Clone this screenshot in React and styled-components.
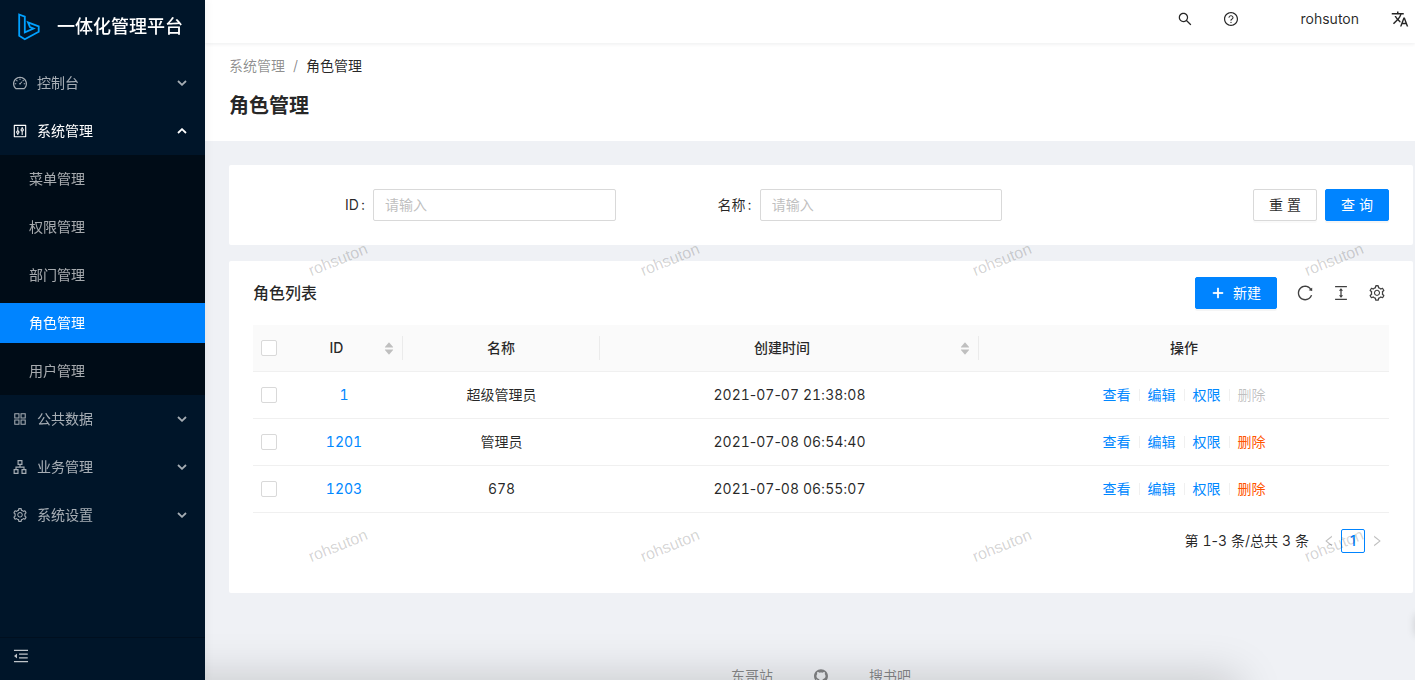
import React, { useState } from "react";
import styled, { createGlobalStyle, css } from "styled-components";
import {
  AiFillCaretDown,
  AiFillCaretUp,
  AiOutlineApartment,
  AiOutlineAppstore,
  AiOutlineColumnHeight,
  AiOutlineControl,
  AiOutlineDashboard,
  AiOutlineGithub,
  AiOutlineLeft,
  AiOutlineMenuFold,
  AiOutlinePlus,
  AiOutlineQuestionCircle,
  AiOutlineReload,
  AiOutlineRight,
  AiOutlineSearch,
  AiOutlineSetting,
} from "react-icons/ai";
import { MdTranslate } from "react-icons/md";

const GlobalStyle = createGlobalStyle`
  * {
    box-sizing: border-box;
  }
  body {
    margin: 0;
    color: rgba(0, 0, 0, 0.85);
    font-family: Inter, "Noto Sans CJK SC", sans-serif;
    font-size: 14px;
    line-height: 22px;
    background: #eff1f5;
  }
  button,
  input {
    font: inherit;
    color: inherit;
  }
  a {
    text-decoration: none;
  }
  svg {
    display: block;
    flex: none;
  }
`;

const Layout = styled.div`
  display: flex;
  height: 100vh;
  overflow: hidden;
`;

const Sider = styled.aside`
  display: flex;
  flex-direction: column;
  flex: none;
  width: 205px;
  background: #001529;
  box-shadow: 2px 0 8px rgba(29, 35, 41, 0.05);
  z-index: 2;
`;

const Brand = styled.a`
  display: flex;
  align-items: center;
  gap: 16px;
  height: 59px;
  padding: 0 0 5px 16px;
  color: #fff;
  font-size: 18px;
  font-weight: 500;
`;

const Menu = styled.nav`
  flex: 1;
`;

const MenuTitle = styled.button`
  display: flex;
  align-items: center;
  gap: 9px;
  width: 100%;
  height: 48px;
  padding: 0 18px 0 12px;
  border: 0;
  background: none;
  color: ${(props) => (props.$open ? "#fff" : "rgba(255, 255, 255, 0.65)")};
  text-align: left;
  cursor: pointer;
`;

const MenuLabel = styled.span`
  flex: 1;
`;

const SubMenu = styled.ul`
  margin: 0;
  padding: 4px 0;
  list-style: none;
  background: #000c17;
`;

const SubItem = styled.li`
  & + & {
    margin-top: 8px;
  }
`;

const SubLink = styled.a`
  display: block;
  height: 40px;
  padding-left: 29px;
  line-height: 40px;
  color: ${(props) => (props.$active ? "#fff" : "rgba(255, 255, 255, 0.65)")};
  background: ${(props) => (props.$active ? "#0084ff" : "transparent")};
`;

const Collapse = styled.button`
  display: flex;
  align-items: center;
  height: 43px;
  padding: 0 12px 6px;
  border: 0;
  border-top: 1px solid #000f1f;
  background: none;
  color: rgba(255, 255, 255, 0.75);
  cursor: pointer;
`;

const Main = styled.div`
  position: relative;
  flex: 1;
  min-width: 0;
  overflow: hidden;
`;

const Header = styled.header`
  position: relative;
  display: flex;
  align-items: center;
  justify-content: flex-end;
  height: 43px;
  padding: 0 6px 5px 24px;
  background: #fff;
  box-shadow: 0 1px 4px rgba(0, 21, 41, 0.08);
  z-index: 1;
`;

const HeaderButton = styled.button`
  display: flex;
  align-items: center;
  padding: 0;
  border: 0;
  background: none;
  cursor: pointer;
  & + & {
    margin-left: 30px;
  }
`;

const UserName = styled.a`
  margin: 0 32px 0 62px;
  color: rgba(0, 0, 0, 0.85);
`;

const PageHeader = styled.div`
  height: 98px;
  padding: 12px 24px 0;
  background: #fff;
`;

const Breadcrumb = styled.nav`
  display: flex;
  gap: 8px;
  color: rgba(0, 0, 0, 0.45);
`;

const Crumb = styled.a`
  color: ${(props) => (props.$current ? "rgba(0, 0, 0, 0.85)" : "inherit")};
`;

const PageTitle = styled.h1`
  margin: 12px 0 0;
  font-size: 20px;
  font-weight: 600;
  line-height: 34px;
`;

const Content = styled.main`
  display: flex;
  flex-direction: column;
  gap: 16px;
  padding: 24px 2px 0 24px;
`;

const Card = styled.section`
  padding: 0 24px;
  background: #fff;
  border-radius: 2px;
`;

const SearchForm = styled.form`
  display: grid;
  grid-template-columns: repeat(3, minmax(0, 1fr));
  gap: 24px;
  padding: 24px 0;
`;

const Field = styled.div`
  display: flex;
  align-items: center;
`;

const FieldLabel = styled.label`
  flex: none;
  width: 120px;
  padding-right: 8px;
  text-align: right;
  &::after {
    content: ":";
    margin-left: 2px;
  }
`;

const TextInput = styled.input`
  flex: 1;
  min-width: 0;
  height: 32px;
  padding: 0 11px 2px;
  border: 1px solid #d9d9d9;
  border-radius: 2px;
  background: #fff;
  &::placeholder {
    color: #bfbfbf;
  }
`;

const Buttons = styled.div`
  display: flex;
  justify-content: flex-end;
  gap: 8px;
`;

const Button = styled.button`
  display: flex;
  align-items: center;
  justify-content: center;
  gap: 8px;
  height: 32px;
  padding: 0 15px;
  border: 1px solid #d9d9d9;
  border-radius: 2px;
  background: #fff;
  box-shadow: 0 2px 0 rgba(0, 0, 0, 0.02);
  white-space: nowrap;
  cursor: pointer;
  ${(props) =>
    props.$primary &&
    css`
      border-color: #0084ff;
      background: #0084ff;
      color: #fff;
      box-shadow: 0 2px 0 rgba(0, 0, 0, 0.04);
    `}
`;

const Toolbar = styled.div`
  display: flex;
  align-items: center;
  height: 64px;
`;

const ListTitle = styled.h2`
  flex: 1;
  margin: 0;
  font-size: 16px;
  font-weight: 500;
`;

const Tools = styled.div`
  display: flex;
  gap: 12px;
  margin-left: 16px;
`;

const ToolButton = styled.button`
  display: flex;
  align-items: center;
  justify-content: center;
  width: 24px;
  height: 24px;
  padding: 0;
  border: 0;
  background: none;
  color: rgba(0, 0, 0, 0.75);
  cursor: pointer;
`;

const Table = styled.table`
  width: 100%;
  table-layout: fixed;
  border-collapse: separate;
  border-spacing: 0;
  text-align: center;
`;

const Th = styled.th`
  height: 47px;
  padding: 0;
  border-bottom: 1px solid #f0f0f0;
  background: #fafafa;
  font-weight: 500;
`;

const HeadCell = styled.div`
  display: flex;
  align-items: center;
  justify-content: center;
  height: 24px;
  padding: 0 8px;
  border-right: ${(props) => (props.$divided ? "1px solid #ebebeb" : "0")};
`;

const HeadText = styled.span`
  flex: 1;
`;

const Sorter = styled.span`
  display: flex;
  flex-direction: column;
  align-items: center;
  width: 10px;
  margin-left: 4px;
  color: #bfbfbf;
  svg + svg {
    margin-top: -5px;
  }
`;

const Td = styled.td`
  height: 47px;
  padding: 0 8px;
  border-bottom: 1px solid #f0f0f0;
`;

const Digits = styled.span`
  font-variant-numeric: tabular-nums;
`;

const Checkbox = styled.input`
  appearance: none;
  display: block;
  width: 16px;
  height: 16px;
  margin: 0 auto;
  border: 1px solid #d9d9d9;
  border-radius: 2px;
  background: #fff;
  &:checked {
    border-color: #0084ff;
    background: #0084ff;
  }
`;

const IdLink = styled.a`
  color: #0088ff;
`;

const Actions = styled.div`
  display: flex;
  align-items: center;
  justify-content: center;
  gap: 8px;
`;

const actionColors = {
  link: "#0088ff",
  danger: "#ff5500",
  disabled: "rgba(0, 0, 0, 0.25)",
};

const Action = styled.a`
  color: ${(props) => actionColors[props.$kind || "link"]};
`;

const Divider = styled.span`
  width: 1px;
  height: 12px;
  background: #f0f0f0;
`;

const Pagination = styled.div`
  display: flex;
  align-items: center;
  justify-content: flex-end;
  padding: 16px 0 40px;
`;

const Total = styled.span`
  margin-right: 8px;
`;

const PageButton = styled.button`
  display: flex;
  align-items: center;
  justify-content: center;
  width: 24px;
  height: 24px;
  padding: 0;
  border: 1px solid ${(props) => (props.$current ? "#0084ff" : "transparent")};
  border-radius: 2px;
  background: transparent;
  color: ${(props) => (props.$current ? "#0084ff" : "rgba(0, 0, 0, 0.25)")};
  font-weight: 500;
`;

const Footer = styled.footer`
  display: flex;
  align-items: center;
  justify-content: center;
  gap: 40px;
  margin-top: 56px;
  color: rgba(0, 0, 0, 0.45);
`;

const FooterLink = styled.a`
  color: inherit;
`;

// repeated user name laid over the page content
const Watermark = styled.div`
  position: absolute;
  top: 43px;
  left: 0;
  display: grid;
  grid-template-columns: repeat(auto-fill, 332px);
  grid-auto-rows: 286px;
  width: calc(100% + 232px);
  padding: 205px 0 0 102px;
  pointer-events: none;
`;

const Mark = styled.span`
  justify-self: start;
  align-self: start;
  color: rgba(0, 0, 0, 0.18);
  font-family: "Liberation Sans", sans-serif;
  font-size: 16px;
  line-height: 24px;
  transform: rotate(-22deg);
`;

const BottomShade = styled.div`
  position: fixed;
  top: 100%;
  left: 0;
  right: 180px;
  height: 40px;
  box-shadow: 0 0 44px 4px rgba(0, 0, 0, 0.17);
  pointer-events: none;
`;

const SideShade = styled.div`
  position: fixed;
  left: 100%;
  bottom: 45px;
  width: 20px;
  height: 20px;
  box-shadow: 0 0 8px rgba(0, 0, 0, 0.15);
  pointer-events: none;
`;

const menu = [
  { title: "控制台", icon: AiOutlineDashboard },
  {
    title: "系统管理",
    icon: AiOutlineControl,
    children: ["菜单管理", "权限管理", "部门管理", "角色管理", "用户管理"],
  },
  { title: "公共数据", icon: AiOutlineAppstore },
  { title: "业务管理", icon: AiOutlineApartment },
  { title: "系统设置", icon: AiOutlineSetting },
];

const roles = [
  { id: 1, name: "超级管理员", createdAt: "2021-07-07 21:38:08", locked: true },
  { id: 1201, name: "管理员", createdAt: "2021-07-08 06:54:40" },
  { id: 1203, name: "678", createdAt: "2021-07-08 06:55:07" },
];

const Logo = () => (
  <svg width="25" height="28" viewBox="0 0 25 28" fill="none">
    <path
      d="M3.2 1.5 L8.8 3.6 V19.3 L17.6 15.6 L14 14 L12 9.4 L22.7 13.4 V18.8 L8.8 26.3 L3.2 22.8 Z"
      stroke="#00a1ff"
      strokeWidth="1.8"
    />
  </svg>
);

const Arrow = ({ open }) => (
  <svg width="10" height="6" viewBox="0 0 10 6" fill="none">
    <path
      d={open ? "M1 5 L5 1.2 L9 5" : "M1 1 L5 4.8 L9 1"}
      stroke="currentColor"
      strokeWidth="1.8"
    />
  </svg>
);

// equal-width digits, everything between them keeps its own width
const NumberText = ({ children }) =>
  String(children)
    .split(/(\d+)/)
    .map((part, i) => (i % 2 ? <Digits key={i}>{part}</Digits> : part));

const App = () => {
  const [openMenu, setOpenMenu] = useState("系统管理");
  const [selected, setSelected] = useState([]);

  const handleToggleRow = (id) => {
    setSelected((prev) =>
      prev.includes(id) ? prev.filter((item) => item !== id) : [...prev, id]
    );
  };

  const handleToggleAll = (e) => {
    setSelected(e.target.checked ? roles.map((role) => role.id) : []);
  };

  return (
    <Layout>
      <GlobalStyle />
      <Sider>
        <Brand href="#">
          <Logo />
          一体化管理平台
        </Brand>
        <Menu>
          {menu.map(({ title, icon: Icon, children }) => {
            const open = openMenu === title;
            return (
              <React.Fragment key={title}>
                <MenuTitle
                  type="button"
                  $open={open}
                  onClick={() => setOpenMenu(open ? "" : title)}
                >
                  <Icon size={16} />
                  <MenuLabel>{title}</MenuLabel>
                  <Arrow open={open} />
                </MenuTitle>
                {open && children && (
                  <SubMenu>
                    {children.map((child) => (
                      <SubItem key={child}>
                        <SubLink href="#" $active={child === "角色管理"}>
                          {child}
                        </SubLink>
                      </SubItem>
                    ))}
                  </SubMenu>
                )}
              </React.Fragment>
            );
          })}
        </Menu>
        <Collapse type="button" aria-label="收起">
          <AiOutlineMenuFold size={18} />
        </Collapse>
      </Sider>

      <Main>
        <Header>
          <HeaderButton type="button" aria-label="搜索">
            <AiOutlineSearch size={16} />
          </HeaderButton>
          <HeaderButton type="button" aria-label="帮助">
            <AiOutlineQuestionCircle size={16} />
          </HeaderButton>
          <UserName href="#">rohsuton</UserName>
          <HeaderButton type="button" aria-label="语言">
            <MdTranslate size={18} />
          </HeaderButton>
        </Header>

        <PageHeader>
          <Breadcrumb>
            <Crumb href="#">系统管理</Crumb>
            <span>/</span>
            <Crumb href="#" $current>
              角色管理
            </Crumb>
          </Breadcrumb>
          <PageTitle>角色管理</PageTitle>
        </PageHeader>

        <Content>
          <Card>
            <SearchForm onSubmit={(e) => e.preventDefault()}>
              <Field>
                <FieldLabel htmlFor="role-id">ID</FieldLabel>
                <TextInput id="role-id" placeholder="请输入" />
              </Field>
              <Field>
                <FieldLabel htmlFor="role-name">名称</FieldLabel>
                <TextInput id="role-name" placeholder="请输入" />
              </Field>
              <Buttons>
                <Button type="reset">重 置</Button>
                <Button type="submit" $primary>
                  查 询
                </Button>
              </Buttons>
            </SearchForm>
          </Card>

          <Card>
            <Toolbar>
              <ListTitle>角色列表</ListTitle>
              <Button type="button" $primary>
                <AiOutlinePlus size={14} style={{ strokeWidth: 60 }} />
                新建
              </Button>
              <Tools>
                <ToolButton type="button" aria-label="刷新">
                  <AiOutlineReload size={18} />
                </ToolButton>
                <ToolButton type="button" aria-label="密度">
                  <AiOutlineColumnHeight size={18} />
                </ToolButton>
                <ToolButton type="button" aria-label="列设置">
                  <AiOutlineSetting size={18} />
                </ToolButton>
              </Tools>
            </Toolbar>

            <Table>
              <colgroup>
                <col width="32" />
                <col width="118" />
                <col width="197" />
                <col width="379" />
                <col width="410" />
              </colgroup>
              <thead>
                <tr>
                  <Th>
                    <Checkbox
                      type="checkbox"
                      aria-label="全选"
                      checked={selected.length === roles.length}
                      onChange={handleToggleAll}
                    />
                  </Th>
                  <Th>
                    <HeadCell $divided>
                      <HeadText>ID</HeadText>
                      <Sorter>
                        <AiFillCaretUp size={12} />
                        <AiFillCaretDown size={12} />
                      </Sorter>
                    </HeadCell>
                  </Th>
                  <Th>
                    <HeadCell $divided>名称</HeadCell>
                  </Th>
                  <Th>
                    <HeadCell $divided>
                      <HeadText>创建时间</HeadText>
                      <Sorter>
                        <AiFillCaretUp size={12} />
                        <AiFillCaretDown size={12} />
                      </Sorter>
                    </HeadCell>
                  </Th>
                  <Th>
                    <HeadCell>操作</HeadCell>
                  </Th>
                </tr>
              </thead>
              <tbody>
                {roles.map((role) => (
                  <tr key={role.id}>
                    <Td>
                      <Checkbox
                        type="checkbox"
                        aria-label={role.name}
                        checked={selected.includes(role.id)}
                        onChange={() => handleToggleRow(role.id)}
                      />
                    </Td>
                    <Td>
                      <IdLink href="#">
                        <NumberText>{role.id}</NumberText>
                      </IdLink>
                    </Td>
                    <Td>
                      <NumberText>{role.name}</NumberText>
                    </Td>
                    <Td>
                      <NumberText>{role.createdAt}</NumberText>
                    </Td>
                    <Td>
                      <Actions>
                        <Action href="#">查看</Action>
                        <Divider />
                        <Action href="#">编辑</Action>
                        <Divider />
                        <Action href="#">权限</Action>
                        <Divider />
                        <Action
                          href="#"
                          $kind={role.locked ? "disabled" : "danger"}
                        >
                          删除
                        </Action>
                      </Actions>
                    </Td>
                  </tr>
                ))}
              </tbody>
            </Table>

            <Pagination>
              <Total>
                <NumberText>第 1-3 条/总共 3 条</NumberText>
              </Total>
              <PageButton type="button" aria-label="上一页">
                <AiOutlineLeft size={14} />
              </PageButton>
              <PageButton type="button" $current>
                1
              </PageButton>
              <PageButton type="button" aria-label="下一页">
                <AiOutlineRight size={14} />
              </PageButton>
            </Pagination>
          </Card>

          <Footer>
            <FooterLink href="#">东哥站</FooterLink>
            <FooterLink href="#" aria-label="GitHub">
              <AiOutlineGithub size={16} />
            </FooterLink>
            <FooterLink href="#">搜书吧</FooterLink>
          </Footer>
        </Content>

        <Watermark aria-hidden="true">
          {Array.from({ length: 8 }, (_, i) => (
            <Mark key={i}>rohsuton</Mark>
          ))}
        </Watermark>
      </Main>
      <BottomShade />
      <SideShade />
    </Layout>
  );
};

export default App;
